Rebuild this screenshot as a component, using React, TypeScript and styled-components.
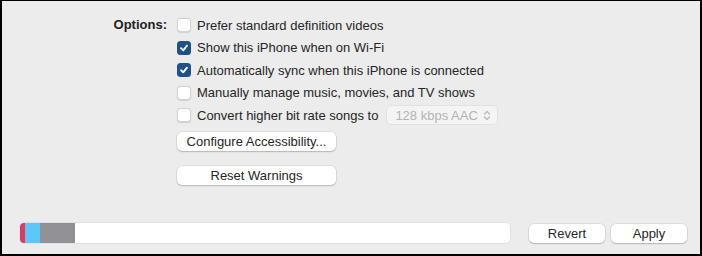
import styled, { createGlobalStyle } from "styled-components";

const GlobalStyle = createGlobalStyle`
    html, body {
        margin: 0;
        padding: 0;
        background: #000;
    }
    body {
        font-family: "Liberation Sans", Arial, sans-serif;
        -webkit-font-smoothing: antialiased;
    }
`;

const options = [
    { label: "Prefer standard definition videos", checked: false },
    { label: "Show this iPhone when on Wi-Fi", checked: true },
    { label: "Automatically sync when this iPhone is connected", checked: true },
    { label: "Manually manage music, movies, and TV shows", checked: false },
];

const storage = [
    { color: "#dc3a5f", width: 5 },
    { color: "#5ac8fa", width: 15 },
    { color: "#919196", width: 35 },
];

const CheckMark = () => (
    <svg width="10" height="10" viewBox="0 0 10 10">
        <path
            d="M2 5.2 L4.2 7.4 L8 2.6"
            fill="none"
            stroke="#fff"
            strokeWidth="1.8"
            strokeLinecap="round"
            strokeLinejoin="round"
        />
    </svg>
);

const UpDown = () => (
    <svg width="8" height="11" viewBox="0 0 8 11">
        <path
            d="M1.5 4 L4 1.5 L6.5 4 M1.5 7 L4 9.5 L6.5 7"
            fill="none"
            stroke="#b8b8b8"
            strokeWidth="1.2"
            strokeLinecap="round"
            strokeLinejoin="round"
        />
    </svg>
);

const App = () => {
    return (
        <>
            <GlobalStyle />
            <Frame>
                <Panel>
                    <OptionsGrid>
                        <OptionsLabel>Options:</OptionsLabel>
                        <OptionList>
                            {options.map((o) => (
                                <OptionRow key={o.label}>
                                    <Checkbox $checked={o.checked}>
                                        {o.checked && <CheckMark />}
                                    </Checkbox>
                                    <OptionText>{o.label}</OptionText>
                                </OptionRow>
                            ))}
                            <OptionRow>
                                <Checkbox $checked={false} />
                                <OptionText>Convert higher bit rate songs to</OptionText>
                                <PopUp>
                                    <span>128 kbps AAC</span>
                                    <UpDown />
                                </PopUp>
                            </OptionRow>
                            <PushButton $top={5.5}>Configure Accessibility...</PushButton>
                            <PushButton $top={15}>Reset Warnings</PushButton>
                        </OptionList>
                    </OptionsGrid>
                    <BottomBar>
                        <StorageBar>
                            {storage.map((s) => (
                                <StorageSegment
                                    key={s.color}
                                    style={{ width: s.width, background: s.color }}
                                />
                            ))}
                        </StorageBar>
                        <FooterButton>Revert</FooterButton>
                        <FooterButton>Apply</FooterButton>
                    </BottomBar>
                </Panel>
            </Frame>
        </>
    );
};

export default App;

const Frame = styled.div`
    width: 702px;
    height: 256px;
    padding: 1px 2px 2px 2px;
    box-sizing: border-box;
    background: #000;
`;

const Panel = styled.div`
    height: 100%;
    background: #ececec;
    display: flex;
    flex-direction: column;
    padding: 13px 13px 11px 18px;
    box-sizing: border-box;
    color: #262626;
    font-size: 13px;
`;

const OptionsGrid = styled.div`
    display: grid;
    grid-template-columns: 147px auto;
    column-gap: 10px;
    align-items: start;
`;

const OptionsLabel = styled.div`
    text-align: right;
    font-weight: bold;
    line-height: 22.5px;
    color: #222;
`;

const OptionList = styled.div`
    display: flex;
    flex-direction: column;
    align-items: flex-start;
`;

const OptionRow = styled.div`
    display: flex;
    align-items: center;
    height: 22.5px;
`;

const Checkbox = styled.span<{ $checked: boolean }>`
    width: 14px;
    height: 14px;
    box-sizing: border-box;
    border-radius: 3.5px;
    margin-right: 6px;
    display: inline-flex;
    align-items: center;
    justify-content: center;
    background: ${(p) => (p.$checked ? "#1f5183" : "#fff")};
    border: ${(p) => (p.$checked ? "none" : "0.5px solid #d0d0d0")};
    box-shadow: ${(p) => (p.$checked ? "none" : "0 0.5px 1px rgba(0,0,0,0.12)")};
`;

const OptionText = styled.span`
    white-space: nowrap;
`;

const PopUp = styled.div`
    margin-left: 8px;
    width: 112px;
    height: 20px;
    box-sizing: border-box;
    border-radius: 5px;
    background: #f4f4f4;
    border: 0.5px solid #e2e2e2;
    display: flex;
    align-items: center;
    justify-content: space-between;
    padding: 0 6px 0 8px;
    color: #b3b3b3;
`;

const PushButton = styled.button<{ $top: number }>`
    margin-top: ${(p) => p.$top}px;
    width: 159px;
    height: 19px;
    padding: 0;
    border: none;
    border-radius: 5px;
    background: #fff;
    box-shadow: 0 0 0 0.5px rgba(0, 0, 0, 0.12), 0 1px 1.5px rgba(0, 0, 0, 0.18);
    font-family: inherit;
    font-size: 13px;
    color: #262626;
`;

const BottomBar = styled.div`
    margin-top: auto;
    display: flex;
    align-items: center;
    height: 20px;
    gap: 6px;
`;

const StorageBar = styled.div`
    flex: none;
    width: 490px;
    height: 20px;
    margin-right: 13px;
    background: #fff;
    border-radius: 4px;
    overflow: hidden;
    display: flex;
    box-shadow: 0 0 0 0.5px rgba(0, 0, 0, 0.1);
`;

const StorageSegment = styled.div`
    height: 100%;
`;

const FooterButton = styled.button`
    flex: none;
    width: 76px;
    height: 19px;
    padding: 0;
    border: none;
    border-radius: 5px;
    background: #fff;
    box-shadow: 0 0 0 0.5px rgba(0, 0, 0, 0.12), 0 1px 1.5px rgba(0, 0, 0, 0.18);
    font-family: inherit;
    font-size: 13px;
    color: #262626;
`;
